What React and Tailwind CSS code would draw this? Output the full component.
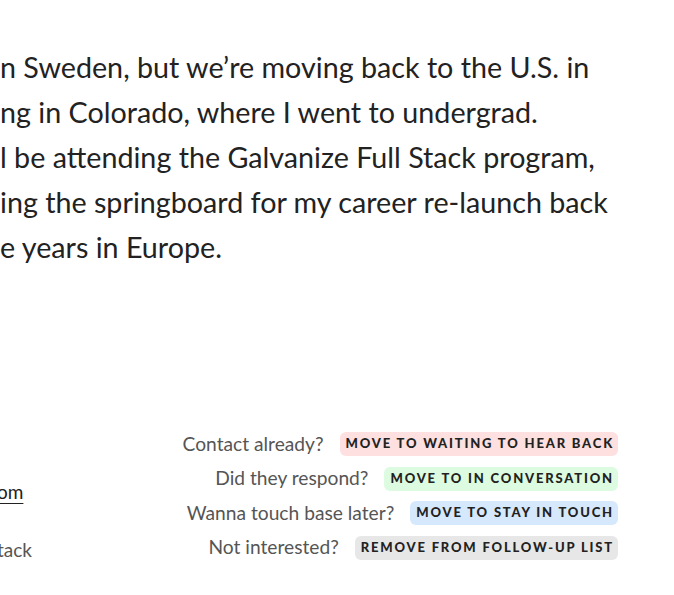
export default function App() {
  const lines = [
    "n Sweden, but we\u2019re moving back to the U.S. in",
    "ng in Colorado, where I went to undergrad.",
    "l be attending the Galvanize Full Stack program,",
    "ing the springboard for my career re-launch back",
    "e years in Europe.",
  ];
  const rows = [
    { q: "Contact already?", b: "Move to waiting to hear back", c: "bg-[#fde0df]" },
    { q: "Did they respond?", b: "Move to in conversation", c: "bg-[#dcfbe0]" },
    { q: "Wanna touch base later?", b: "Move to stay in touch", c: "bg-[#d6e8fc]" },
    { q: "Not interested?", b: "Remove from follow-up list", c: "bg-[#e7e7e7]" },
  ];
  return (
    <div className="w-[674px] h-[595px] overflow-hidden bg-white" style={{ fontFamily: "Lato, 'Noto Sans', sans-serif" }}>
      <div className="pt-[45px] text-[#222] text-[28.7px] leading-[45px]">
        {lines.map((l, i) => (
          <div key={i} className="whitespace-nowrap">{l}</div>
        ))}
      </div>
      <div className="flex mt-[162px] pr-[56px]">
        <div className="w-[120px] flex flex-col text-[19px] text-[#444] -ml-[3px]">
          <div className="mt-[46px] leading-[28px] text-[#222] underline underline-offset-[4px]">om</div>
          <div className="mt-[30px] leading-[28px] text-[#555]">tack</div>
        </div>
        <div className="flex-1 flex flex-col items-end gap-[10.6px]">
          {rows.map((r) => (
            <div key={r.q} className="flex items-center h-[24px] gap-[16px]">
              <span className="text-[19.2px] text-[#555] whitespace-nowrap">{r.q}</span>
              <span className={`${r.c} h-[24px] flex items-center pl-[6px] pr-[4px] rounded-[6px] text-[13px] font-black uppercase tracking-[0.14em] text-[#222] whitespace-nowrap`}>{r.b}</span>
            </div>
          ))}
        </div>
      </div>
    </div>
  );
}
